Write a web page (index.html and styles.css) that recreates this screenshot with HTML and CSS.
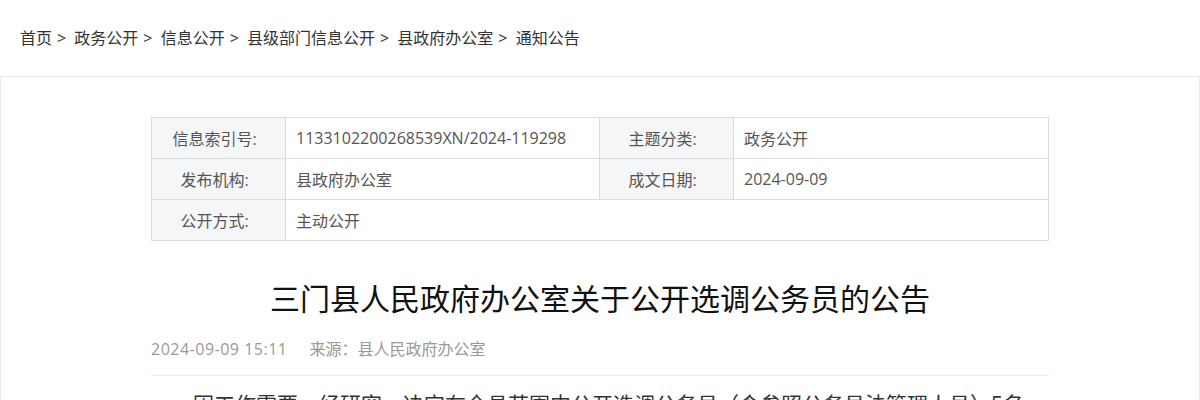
FILE: index.html
```html
<!DOCTYPE html>
<html lang="zh-CN">
<head>
  <meta charset="UTF-8">
  <title>三门县人民政府办公室关于公开选调公务员的公告</title>
  <link rel="stylesheet" href="styles.css">
</head>
<body>

<div class="crumbs">
  <a href="#">首页</a><span class="sep">&gt;</span>
  <a href="#">政务公开</a><span class="sep">&gt;</span>
  <a href="#">信息公开</a><span class="sep">&gt;</span>
  <a href="#">县级部门信息公开</a><span class="sep">&gt;</span>
  <a href="#">县政府办公室</a><span class="sep">&gt;</span>
  <a href="#">通知公告</a>
</div>

<div class="panel">
  <div class="article">

    <table class="info-table">
      <colgroup>
        <col class="col-label">
        <col class="col-value">
        <col class="col-label">
        <col>
      </colgroup>
      <tr>
        <th>信息索引号:</th>
        <td>1133102200268539XN/2024-119298</td>
        <th>主题分类:</th>
        <td>政务公开</td>
      </tr>
      <tr>
        <th>发布机构:</th>
        <td>县政府办公室</td>
        <th>成文日期:</th>
        <td>2024-09-09</td>
      </tr>
      <tr>
        <th>公开方式:</th>
        <td colspan="3">主动公开</td>
      </tr>
    </table>

    <h1 class="title">三门县人民政府办公室关于公开选调公务员的公告</h1>

    <div class="meta">
      <span class="time">2024-09-09 15:11</span>
      <span class="source">来源：县人民政府办公室</span>
    </div>

    <div class="content">
      <p>因工作需要，经研究，决定在全县范围内公开选调公务员（含参照公务员法管理人员）5名，现将有关事项公告如下：</p>
    </div>

  </div>
</div>

</body>
</html>
```

FILE: styles.css
```css
body {
  margin: 0;
  font-family: "Open Sans", "Noto Sans CJK SC", sans-serif;
  color: #333;
  background: #fff;
}

a {
  color: #333;
  text-decoration: none;
}

.crumbs {
  height: 76px;
  line-height: 76px;
  padding-left: 20px;
  font-size: 16px;
}

.crumbs .sep {
  margin: 0 4px 0 5px;
}

.panel {
  border: 1px solid #ebebeb;
  border-bottom: none;
  height: 400px;
}

.article {
  width: 898px;
  margin: 40px auto 0;
}

.info-table {
  width: 100%;
  table-layout: fixed;
  border-collapse: collapse;
  font-size: 16px;
  color: #555;
}

.info-table .col-label {
  width: 134px;
}

.info-table .col-value {
  width: 314px;
}

.info-table th,
.info-table td {
  border: 1px solid #dcdcdc;
  height: 40px;
  padding: 0;
  font-weight: normal;
  white-space: nowrap;
}

.info-table th {
  background: #f5f6f8;
  text-align: center;
  padding-right: 8px;
}

.info-table td {
  padding-left: 10px;
}

.title {
  margin: 38px 0 0;
  font-size: 30px;
  font-weight: normal;
  color: #111;
  text-align: center;
  line-height: 40px;
}

.meta {
  margin-top: 18px;
  font-size: 16px;
  color: #999;
  line-height: 24px;
  padding-bottom: 14px;
  border-bottom: 1px solid #ececec;
}

.meta .time {
  letter-spacing: 0.5px;
}

.meta .source {
  margin-left: 18px;
}

.content {
  font-size: 21px;
  color: #333;
}

.content p {
  margin: 10px 0 0;
  text-indent: 2em;
  line-height: 36px;
}
```
